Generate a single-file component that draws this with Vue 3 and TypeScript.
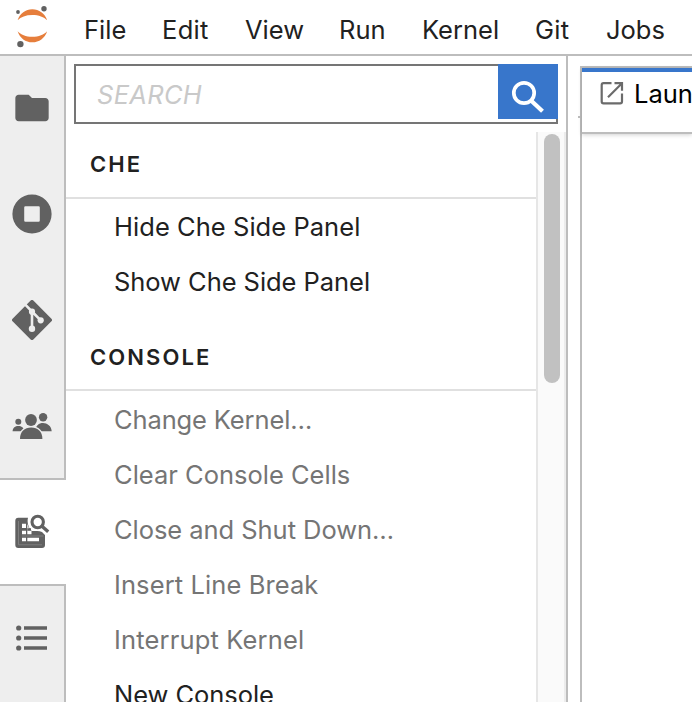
<script setup lang="ts">
interface Command { label: string; enabled: boolean; cls: string }
interface Section { title: string; cls: string; commands: Command[] }

const menus: { label: string; cls: string }[] = [
  { label: 'File', cls: 'file' },
  { label: 'Edit', cls: 'edit' },
  { label: 'View', cls: 'view' },
  { label: 'Run', cls: 'run' },
  { label: 'Kernel', cls: 'kernel' },
  { label: 'Git', cls: 'git' },
  { label: 'Jobs', cls: 'jobs' },
]

const sections: Section[] = [
  {
    title: 'CHE',
    cls: 'che',
    commands: [
      { label: 'Hide Che Side Panel', enabled: true, cls: 'hide' },
      { label: 'Show Che Side Panel', enabled: true, cls: 'show' },
    ],
  },
  {
    title: 'CONSOLE',
    cls: 'console',
    commands: [
      { label: 'Change Kernel…', enabled: false, cls: 'change' },
      { label: 'Clear Console Cells', enabled: false, cls: 'clear' },
      { label: 'Close and Shut Down…', enabled: false, cls: 'close' },
      { label: 'Insert Line Break', enabled: false, cls: 'insert' },
      { label: 'Interrupt Kernel', enabled: false, cls: 'interrupt' },
      { label: 'New Console', enabled: true, cls: 'new' },
    ],
  },
]
</script>

<template>
  <div class="app">
    <header class="menubar">
      <svg class="logo" viewBox="0 0 64 54">
        <path fill="#e67e3c" d="M17.600 20.300C20 13.400 25.500 9.300 32.300 9.300S44.800 13.400 47.200 20.300C44 16.800 38.800 14.900 32.300 14.900S20.800 16.800 17.600 20.300ZM17.600 31.200C20 38.200 25.500 42.300 32.300 42.300S44.800 38.200 47.200 31.200C44 34.700 38.800 36.700 32.300 36.700S20.800 34.700 17.600 31.200Z" />
        <g fill="#616161"><circle cx="18" cy="12" r="1.900" /><circle cx="44" cy="8.700" r="2.700" /><circle cx="20.400" cy="44.100" r="3.200" /></g>
      </svg>
      <nav class="menus">
        <span v-for="m in menus" :key="m.label" class="menu" :class="m.cls">{{ m.label }}</span>
      </nav>
    </header>
    <div class="body">
      <aside class="rail">
        <div class="group top">
          <div class="tab">
            <svg viewBox="0 0 24 24"><path d="M10 4H4c-1.100 0-1.990.9-1.990 2L2 18c0 1.100.9 2 2 2h16c1.100 0 2-.9 2-2V8c0-1.100-.9-2-2-2h-8l-2-2z" /></svg>
          </div>
          <div class="tab">
            <svg viewBox="0 0 40 40"><path fill-rule="evenodd" d="M20 .4a19.600 19.600 0 1 0 0 39.200a19.600 19.600 0 1 0 0-39.200ZM13.400 12.200h13.200a1.200 1.200 0 0 1 1.200 1.200v13.200a1.200 1.200 0 0 1-1.200 1.200H13.400a1.200 1.200 0 0 1-1.200-1.200V13.400a1.200 1.200 0 0 1 1.200-1.200Z" /></svg>
          </div>
          <div class="tab">
            <svg viewBox="0 0 40 40">
              <rect x="5.300" y="5.300" width="29.400" height="29.400" rx="1.900" transform="rotate(45 20 20)" />
              <path d="M12.800 4.200L20 11.500V28.500M20.500 12L28.700 20.300" fill="none" stroke="#eee" stroke-width="2.600" />
              <g fill="#eee"><circle cx="20" cy="11.700" r="3.100" /><circle cx="20" cy="28.700" r="3.200" /><circle cx="28.700" cy="20.300" r="3.100" /></g>
            </svg>
          </div>
          <div class="tab">
            <svg viewBox="0 0 40 40">
              <circle cx="31.100" cy="11.300" r="4.200" /><circle cx="6.300" cy="15.700" r="3" />
              <path d="M23.500 25.300C23.500 19.500 27 17 31 17S39.600 20 39.700 25.300ZM.6 25.300C.8 21.700 3.200 20 6.300 20S12 21.700 12.500 25.300Z" />
              <path class="gap" d="M8 33C8 25.500 12.500 21.500 19.200 21.500S30.300 25.500 30.400 33Z" />
              <circle cx="19" cy="14" r="5.900" />
            </svg>
          </div>
        </div>
        <div class="tab active">
          <svg viewBox="0 0 40 40">
            <path d="M6.300 5.700H16C14.800 10 16.500 16.500 20 19H23.500Q27 18.500 30 20L33 23V33Q33 36 30 36H6.300Q3.300 36 3.300 33V8.700Q3.300 5.700 6.300 5.700Z" />
            <path fill="#fff" d="M10 11.700H14V16H10ZM10 18.800H14V22.300H10ZM10 25.700H14V29.200H10ZM15.300 25.700H27V29.200H15.300ZM15.300 11.700Q16 16 19.500 19V22.300H15.300Z" />
            <path d="M15.300 16.200H19V18.800H15.300Z" />
            <path d="M10 24H31.500M6.500 9V32.800H30" fill="none" stroke="#858585" stroke-width=".8" />
            <circle cx="25.700" cy="10" r="5.700" fill="none" stroke="#616161" stroke-width="3.100" />
            <path d="M29.700 14L36.200 19.800" stroke="#616161" stroke-width="3.400" />
          </svg>
        </div>
        <div class="group bottom">
          <div class="tab">
            <svg viewBox="0 0 40 40"><circle cx="6.700" cy="10" r="2.600" /><circle cx="6.700" cy="20" r="2.600" /><circle cx="6.700" cy="30" r="2.600" /><path d="M12 8.300H35V11.800H12ZM12 18.300H35V21.800H12ZM12 28.300H35V31.800H12Z" /></svg>
          </div>
        </div>
      </aside>
      <section class="palette">
        <div class="search">
          <span class="placeholder">SEARCH</span>
          <div class="go">
            <svg viewBox="0 0 60 55"><circle cx="26" cy="29" r="10.200" fill="none" stroke="#fff" stroke-width="3.700" /><path d="M33 36.500L44.500 47.300" stroke="#fff" stroke-width="4.200" /></svg>
          </div>
        </div>
        <div class="scroll">
          <div class="list">
            <div v-for="s in sections" :key="s.title" class="section" :class="s.cls">
              <h2>{{ s.title }}</h2>
              <ul>
                <li v-for="c in s.commands" :key="c.label" :class="{ disabled: !c.enabled }"><span :class="c.cls">{{ c.label }}</span></li>
              </ul>
            </div>
          </div>
          <div class="track"><div class="thumb"></div></div>
        </div>
      </section>
      <main class="dock">
        <div class="tick"></div>
        <div class="pane">
          <div class="doctab">
            <svg viewBox="0 0 24 24"><path d="M11.500 2.200H3.500Q1.700 2.200 1.700 4V20.500Q1.700 22.300 3.500 22.300H20.200Q22 22.300 22 20.500V12.500M14.500 2.200H22V9.800M22 2.200L8 16.200" fill="none" stroke="#6b6b6b" stroke-width="2.200" /></svg>
            <span>Launcher</span>
          </div>
        </div>
      </main>
    </div>
  </div>
</template>

<style>
body { margin: 0; overflow: hidden; }
</style>

<style scoped>
* { box-sizing: border-box; }
.app { width: 692px; height: 702px; overflow: hidden; display: flex; flex-direction: column; background: #fff; color: #212121; font: 25.500px/30px Inter, "Liberation Sans", sans-serif; white-space: nowrap; }
.menubar { display: flex; flex: none; height: 56px; border-bottom: 2px solid #bdbdbd; }
.logo { width: 64px; height: 54px; flex: none; }
.menus { display: flex; padding: 15px 0 0 20px; }
.menu { flex: none; }
.file { width: 78px; }
.edit { width: 83px; letter-spacing: .3px; }
.view { width: 94px; }
.run { width: 83px; }
.kernel { width: 113px; }
.git { width: 71px; letter-spacing: .3px; }
.body { flex: 1; min-height: 0; display: flex; }
.rail { width: 66px; flex: none; display: flex; flex-direction: column; fill: #616161; }
.group { background: #eee; border-right: 2px solid #bdbdbd; display: flex; flex-direction: column; gap: 2px; }
.top { border-bottom: 2px solid #bdbdbd; }
.bottom { border-top: 2px solid #bdbdbd; flex: 1; }
.tab { height: 104px; width: 64px; flex: none; display: flex; align-items: center; justify-content: center; }
.tab svg { width: 40px; height: 40px; }
.gap { stroke: #eee; stroke-width: 2.500px; paint-order: stroke; }
.palette { width: 502px; flex: none; border-right: 2px solid #bdbdbd; display: flex; flex-direction: column; padding-top: 8px; }
.search { height: 60px; flex: none; margin: 0 8px; border: 2px solid #757575; display: flex; justify-content: space-between; align-items: flex-start; }
.placeholder { padding: 14px 0 0 21px; font-style: italic; color: #c9c9c9; letter-spacing: .3px; }
.go { width: 60px; height: 55px; background: #3876cb; margin: -2px -2px 0 0; flex: none; }
.go svg { display: block; width: 60px; height: 55px; }
.scroll { flex: 1; min-height: 0; margin-top: 8px; display: flex; }
.list { width: 470px; overflow: hidden; }
h2 { margin: 0; height: 67px; padding: 17px 0 0 24px; border-bottom: 2px solid #e0e0e0; font-size: 22px; font-weight: 600; letter-spacing: 2.100px; line-height: 30px; }
ul { margin: 0; padding: 1px 0 14px; list-style: none; }
.console h2 { padding-top: 18px; }
.console ul { padding-top: 2px; }
li { height: 55px; padding: 12px 0 0 48px; }
.hide { letter-spacing: .05px; }
.show, .close, .new { letter-spacing: -.05px; }
.change { letter-spacing: -.13px; }
.insert { letter-spacing: .1px; }
.interrupt { letter-spacing: .16px; }
.disabled { color: #757575; }
.track { width: 30px; background: #fafafa; border-left: 2px solid #e6e6e6; border-right: 2px solid #ececec; padding: 2px 0 0 6px; }
.thumb { width: 16px; height: 249px; border-radius: 8px; background: #c1c1c1; }
.dock { flex: 1; min-width: 0; display: flex; padding: 10px 0 0 10px; }
.tick { width: 2px; height: 2px; margin-top: 50px; background: #bdbdbd; }
.pane { flex: 1; min-width: 0; border: solid #bdbdbd; border-width: 2px 0 0 2px; }
.doctab { height: 66px; border-top: 4px solid #3876cb; border-bottom: 2px solid #bdbdbd; box-shadow: 0 1px 4px rgba(0, 0, 0, .18); display: flex; padding: 9px 0 0 18px; color: #000; overflow: hidden; }
.doctab svg { width: 24px; height: 24px; flex: none; }
.doctab span { padding-left: 10px; margin-top: -2px; }
</style>
